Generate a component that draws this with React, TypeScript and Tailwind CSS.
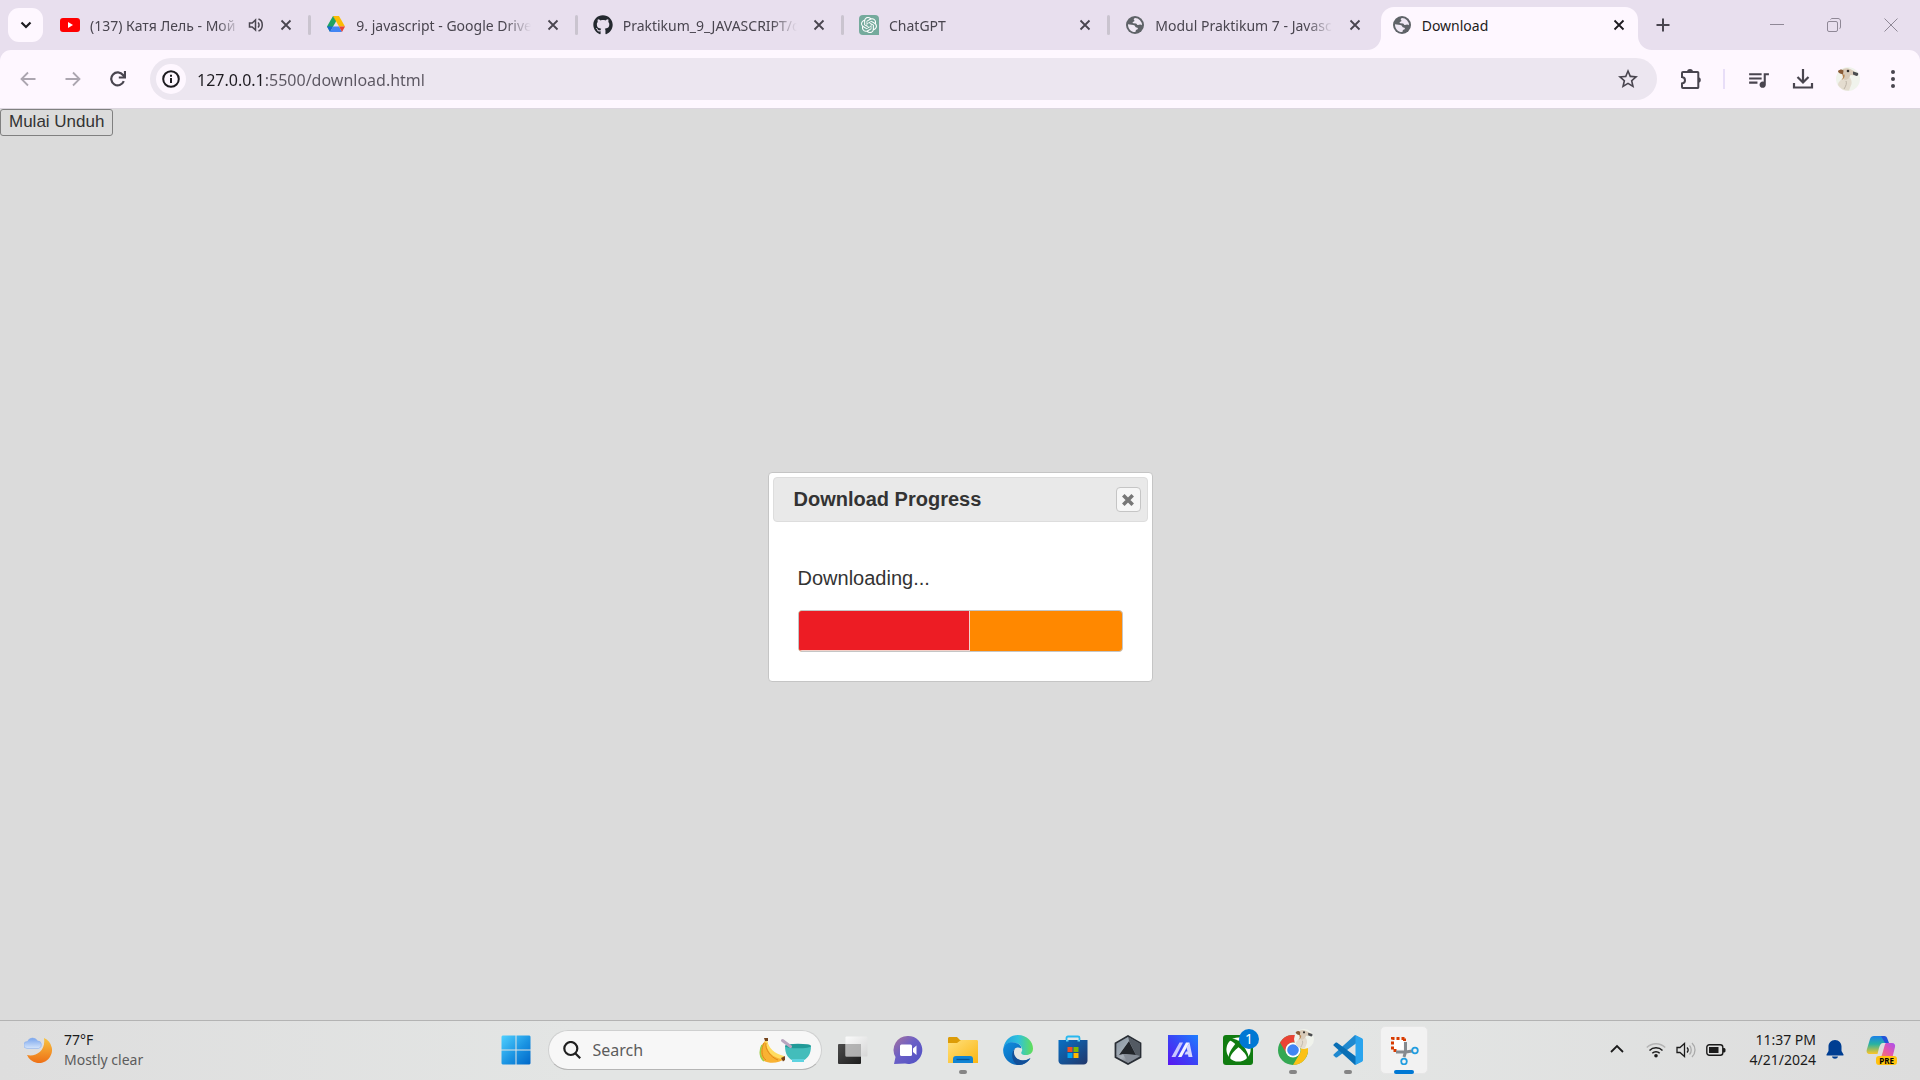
import React from "react";
import { MdQueueMusic, MdStarOutline } from "react-icons/md";
import { FaXbox, FaGithub } from "react-icons/fa";
import { SiOpenai } from "react-icons/si";

/* ---------- favicons ---------- */

const YouTube = () => (
  <svg viewBox="0 0 20 20" className="size-5 shrink-0">
    <rect y="3" width="20" height="14" rx="3" fill="#f00" />
    <path d="M8 7l5 3-5 3z" fill="#fff" />
  </svg>
);

const Drive = () => (
  <svg viewBox="0 0 20 20" className="size-5 shrink-0">
    <path d="M7 1h6l-3.400 5.600z" fill="#188038" />
    <path d="M7 1L1 11.600l3 5.200 6-10.400z" fill="#1ea362" />
    <path d="M7 1h6l6 10.600h-6z" fill="#fbbc04" />
    <path d="M1 11.600h6L4 17z" fill="#1967d2" />
    <path d="M7 11.600h6L16 17H4z" fill="#4285f4" />
    <path d="M13 11.600h6L16 17z" fill="#ea4335" />
  </svg>
);

const Globe = () => (
  <svg viewBox="0 0 20 20" className="size-5 shrink-0">
    <circle cx="10" cy="10" r="9" fill="#5f6368" />
    <path
      d="M10 3c-1.300.6-1.600 1.600-.8 2.300.8.6.2 1.200-.9 1.500-1 .3-.8 1.400.1 1.500l2.500.1c1 .1 1 1.200 1.700 1.500.9.3 1.700-.5 2.700-.4.8.1 1.200.7 1.700.7A7.100 7.100 0 0 0 10 3z"
      fill="#efe8f4"
    />
    <path
      d="M3 9.200C2.800 13.300 5.800 17 10 17c1 0 .5-1.300 1-1.900.5-.6 1.800-.4 1.900-1.600.1-1-.9-1-1.800-1.100-1-.1-.8-1.200-1.500-1.800C8.300 9.500 5 9.900 3 9.200z"
      fill="#efe8f4"
    />
  </svg>
);

const ChatFavicon = () => (
  <span className="flex size-5 shrink-0 items-center justify-center rounded-l-[4px] rounded-tr-[4px] bg-[#74aa9c] text-white">
    <SiOpenai size={16} />
  </span>
);

/* ---------- browser icons ---------- */

const Cross = () => (
  <svg viewBox="0 0 12 12" className="size-3" stroke="currentColor" strokeWidth="1.800">
    <path d="M1.500 1.500l9 9M10.500 1.500l-9 9" />
  </svg>
);

const Audio = () => (
  <svg viewBox="0 0 16 16" className="size-4 shrink-0" fill="none" stroke="currentColor" strokeWidth="1.500">
    <path d="M1.500 6v4h2.700l3.300 3V3L4.200 6z" />
    <path d="M10 5.500c1.400 1.200 1.400 3.800 0 5M10.500 2c5 1.600 5 10.400 0 12" />
  </svg>
);

const Arrow = ({ flip = false }: { flip?: boolean }) => (
  <svg viewBox="0 0 16 16" className={flip ? "size-4 -scale-x-100" : "size-4"} fill="none" stroke="currentColor" strokeWidth="1.800">
    <path d="M15.500 8H2M8 1.500L1.500 8 8 14.500" />
  </svg>
);

const Dog = ({ className }: { className: string }) => (
  <svg viewBox="0 0 24 24" className={className}>
    <circle cx="12" cy="12" r="12" fill="#f0f3ec" />
    <path d="M6 12c2-2 4-3 7-2 2 1 3 4 2.500 7L13 23.500A12 12 0 0 1 2 18c0-3 2-4 4-6z" fill="#e4dccf" />
    <path d="M7 2c3-1.500 6-1 9 1l5 3c1 1 .5 2.500-1 2.500L14.500 8c-1 3-3 5-6 5L6 8z" fill="#d9cbb9" />
    <path d="M2 4c2-2 4-2 5.500-.5L7 7.500 4 6.500C3 6 2 5 2 4z" fill="#8a5c37" />
    <path d="M6.500 7.500c1 2 .5 4-1 5.500 2.500-1 3.500-3 3-5.500z" fill="#b9854f" />
    <path d="M17 4.500l5 1.500c.5 1.500 0 3-1.500 3L17 7.500z" fill="#4b4d50" />
    <circle cx="12" cy="4" r="1.300" fill="#33302d" />
    <path d="M10 14c1 2 0 5-2 8" fill="none" stroke="#bdb3a6" />
  </svg>
);

type TabProps = { title: string; icon: React.ReactNode; audio?: boolean; active?: boolean; last?: boolean };

const Tab = ({ title, icon, audio, active, last }: TabProps) => (
  <div
    className={
      active
        ? "relative flex h-[43px] min-w-0 items-center self-end rounded-t-[13px] bg-[#fef7ff] pr-[13px] pb-[7px] pl-[11px] text-[#1d1b20]"
        : "flex h-[50px] min-w-0 items-center pl-[11px] text-[#49454f]"
    }
  >
    {active && (
      <>
        <svg viewBox="0 0 14 14" className="absolute bottom-0 -left-[14px] size-[14px]">
          <path d="M14 0v14H0A14 14 0 0 0 14 0z" fill="#fef7ff" />
        </svg>
        <svg viewBox="0 0 14 14" className="absolute -right-[14px] bottom-0 size-[14px]">
          <path d="M0 0v14h14A14 14 0 0 1 0 0z" fill="#fef7ff" />
        </svg>
      </>
    )}
    {icon}
    <span
      className={
        active
          ? "ml-2.5 min-w-0 flex-1 overflow-hidden pt-0.5 text-sm whitespace-nowrap"
          : "ml-2.5 min-w-0 flex-1 overflow-hidden [mask-image:linear-gradient(to_right,black_85%,transparent)] pt-0.5 text-sm whitespace-nowrap"
      }
    >
      {title}
    </span>
    {audio && (
      <span className="ml-2">
        <Audio />
      </span>
    )}
    <button aria-label={`Close ${title}`} className="ml-4 shrink-0">
      <Cross />
    </button>
    {!active && <span className={last ? "ml-4 w-1" : "mr-1 ml-4 h-5 w-[3px] rounded-full bg-[#cac4cf]"} />}
  </div>
);

const TabStrip = () => (
  <div className="flex h-[50px] items-center">
    <button aria-label="Search tabs" className="ml-2 flex h-[34px] w-[35px] shrink-0 items-center justify-center rounded-[11px] bg-[#fef7ff]">
      <svg viewBox="0 0 12 12" className="size-3" fill="none" stroke="#1d1b20" strokeWidth="2.200">
        <path d="M1.500 3.500L6 8l4.500-4.500" />
      </svg>
    </button>
    <div className="ml-1.5 grid max-w-[1589px] min-w-0 flex-1 grid-cols-[repeat(5,minmax(0,266fr))_minmax(0,257fr)]">
      <Tab title="(137) Катя Лель - Мой Мармеладный" icon={<YouTube />} audio />
      <Tab title="9. javascript - Google Drive" icon={<Drive />} />
      <Tab title="Praktikum_9_JAVASCRIPT/download" icon={<FaGithub className="size-5 shrink-0 text-[#24292f]" />} />
      <Tab title="ChatGPT" icon={<ChatFavicon />} />
      <Tab title="Modul Praktikum 7 - Javascript" icon={<Globe />} last />
      <Tab title="Download" icon={<Globe />} active />
    </div>
    <button aria-label="New tab" className="ml-[18px] shrink-0">
      <svg viewBox="0 0 14 14" className="size-3.5" stroke="#49454f" strokeWidth="2">
        <path d="M7 .5v13M.5 7h13" />
      </svg>
    </button>
    <div className="mr-[22px] ml-auto flex shrink-0 items-center gap-[43px] text-[#8f8896]">
      <button aria-label="Minimize">
        <svg viewBox="0 0 14 14" className="size-3.5" stroke="currentColor">
          <path d="M0 6.500h14" />
        </svg>
      </button>
      <button aria-label="Restore">
        <svg viewBox="0 0 14 14" className="size-3.5" fill="none" stroke="currentColor">
          <rect x=".5" y="3.500" width="10" height="10" rx="1.500" />
          <path d="M3.500 1.500C4 .8 4.500.5 5 .5h6c1.500 0 2.500 1 2.500 2.500v6c0 .8-.5 1.500-1 1.800" />
        </svg>
      </button>
      <button aria-label="Close window">
        <svg viewBox="0 0 14 14" className="size-3.5" stroke="currentColor">
          <path d="M.5.5l13 13M13.500.5l-13 13" />
        </svg>
      </button>
    </div>
  </div>
);

const Toolbar = () => (
  <div className="flex h-[59px] items-center rounded-t-[11px] border-b border-[#dcd6df] bg-[#fef7ff] text-[#49454f]">
    <div className="ml-5 flex items-center gap-[29px]">
      <button aria-label="Back" className="text-[#aca6b0]">
        <Arrow />
      </button>
      <button aria-label="Forward" className="text-[#aca6b0]">
        <Arrow flip />
      </button>
      <button aria-label="Reload">
        <svg viewBox="0 0 16 16" className="size-4" fill="none" stroke="currentColor" strokeWidth="2.200">
          <path d="M13.800 10.200A6.500 6.500 0 1 1 13 4l1.500 2" />
          <path d="M15 0v6.500H8.800" />
        </svg>
      </button>
    </div>
    <div className="ml-6 flex h-[42px] flex-1 items-center rounded-full bg-[#ece6f0] pl-1.5">
      <button aria-label="View site information" className="flex size-[30px] shrink-0 items-center justify-center rounded-full bg-[#fef7ff]">
        <svg viewBox="0 0 18 18" className="size-[18px]" fill="none" stroke="#1d1b20" strokeWidth="2">
          <circle cx="9" cy="9" r="7.800" />
          <path d="M9 8v5M9 4.800v2" />
        </svg>
      </button>
      <input
        aria-label="Address"
        defaultValue="127.0.0.1:5500/download.html"
        className="ml-[11px] min-w-0 flex-1 bg-[linear-gradient(to_right,#1d1b20_66px,#5b5661_66px)] bg-clip-text pt-0.5 text-base text-transparent outline-none"
      />
      <button aria-label="Bookmark this tab" className="mr-[17px]">
        <MdStarOutline size={24} />
      </button>
    </div>
    <button aria-label="Extensions" className="ml-[23px]">
      <svg viewBox="0 0 22 22" className="size-[22px]" fill="none" stroke="currentColor" strokeWidth="2">
        <path d="M3 4h14.500a.8.8 0 0 1 .8.8v14.400a.8.8 0 0 1-.8.8H3a1 1 0 0 1-1-1v-3.500c4-.5 4-6 0-6.500V5a1 1 0 0 1 1-1z" />
        <path d="M7 4a3 3 0 0 1 6 0zM18 9.200a2.800 2.800 0 0 1 0 5.600z" fill="currentColor" stroke="none" />
      </svg>
    </button>
    <span className="ml-[21px] h-5 w-0.5 bg-[#e8def8]" />
    <button aria-label="Media controls" className="ml-[21px]">
      <MdQueueMusic size={25} />
    </button>
    <button aria-label="Downloads" className="ml-[21px]">
      <svg viewBox="0 0 22 22" className="size-[22px]" fill="none" stroke="currentColor" strokeWidth="2.200">
        <path d="M11 1v13M5.500 9L11 14.500 16.500 9M2 15v4.500h18V15" />
      </svg>
    </button>
    <button aria-label="Profile" className="ml-[22px]">
      <Dog className="size-6" />
    </button>
    <button aria-label="Menu" className="mr-[25px] ml-[31px]">
      <svg viewBox="0 0 4 18" className="h-[18px] w-1" fill="currentColor">
        <circle cx="2" cy="2" r="2" />
        <circle cx="2" cy="9" r="2" />
        <circle cx="2" cy="16" r="2" />
      </svg>
    </button>
  </div>
);

/* ---------- page ---------- */

const Dialog = () => (
  <section
    role="dialog"
    aria-labelledby="dialog-title"
    className="w-[385px] rounded-[4px] border border-[#c5c5c5] bg-white p-1 font-['Liberation_Sans',Arial,sans-serif] text-xl text-[#333333]"
  >
    <header className="flex h-[45px] items-center justify-between rounded-[4px] border border-[#dddddd] bg-[#e9e9e9] pr-1.5 pl-5">
      <h1 id="dialog-title" className="pb-0.5 font-bold">
        Download Progress
      </h1>
      <button aria-label="Close" className="flex size-[25px] items-center justify-center rounded-[4px] border border-[#c5c5c5] bg-[#f6f6f6]">
        <svg viewBox="0 0 12 12" className="size-3" stroke="#777" strokeWidth="3.600">
          <path d="M1.300 1.300l9.400 9.400M10.700 1.300l-9.400 9.400" />
        </svg>
      </button>
    </header>
    <div className="px-[25px] pt-[42px] pb-[25px]">
      <p id="progress-label" className="leading-7">
        Downloading...
      </p>
      <div
        role="progressbar"
        aria-labelledby="progress-label"
        aria-valuenow={53}
        aria-valuemin={0}
        aria-valuemax={100}
        className="mt-[18px] flex h-[42px] overflow-hidden rounded-[4px] border border-[#c5c5c5] bg-[#ff8800]"
      >
        <div className="border-r border-b border-[#f5d0c8] bg-[#ed1c24]" style={{ width: "53%" }} />
      </div>
    </div>
  </section>
);

/* ---------- taskbar ---------- */

const Weather = () => (
  <svg viewBox="0 0 28 28" className="size-7">
    <defs>
      <linearGradient id="moon" x1="0" y1="0" x2="0" y2="1">
        <stop offset="0" stopColor="#f8c441" />
        <stop offset="1" stopColor="#ee7016" />
      </linearGradient>
      <linearGradient id="cloud" x1="0" y1="0" x2="0" y2="1">
        <stop offset="0" stopColor="#79a5ed" />
        <stop offset="1" stopColor="#d5e5fb" />
      </linearGradient>
    </defs>
    <path d="M20 2a13 13 0 1 1-17 17c9 2 19-4 17-17z" fill="url(#moon)" />
    <path d="M3 12.500a3.500 3.500 0 0 1 .5-7 5.500 5.500 0 0 1 10-.5 3.800 3.800 0 0 1 1 7.500z" fill="url(#cloud)" stroke="#8cb0ec" strokeWidth=".6" />
  </svg>
);

const Start = () => (
  <svg viewBox="0 0 30 30" className="size-[30px]">
    <defs>
      <linearGradient id="win" x1="0" y1="0" x2="1" y2="1">
        <stop offset="0" stopColor="#4fd0ff" />
        <stop offset=".55" stopColor="#1a93e2" />
        <stop offset="1" stopColor="#0067c8" />
      </linearGradient>
    </defs>
    <path d="M1.500.5H14.500V14.500H.5V1.500zM15.500.5H28.500l1 1V14.500h-14zM.5 15.500h14v14H1.500l-1-1zM15.500 15.500h14v13l-1 1h-13z" fill="url(#win)" />
  </svg>
);

const SearchArt = () => (
  <svg viewBox="0 0 52 26" className="h-[26px] w-[52px] shrink-0">
    <path d="M6 4C0 10-1 20 5 24c6 3 16 2 20-2-6-1-14-6-17-18z" fill="#f9b233" />
    <path d="M6 3h2c1 8 8 14 17 16v3C14 22 7 14 6 3z" fill="#ffdc60" />
    <path d="M5 6C2 11 2 20 7 23M7 6c-1 6 4 14 12 17" fill="none" stroke="#df8a18" />
    <path d="M3 8c-3 6-2 13 2 16" fill="none" stroke="#9fce49" strokeWidth="1.500" />
    <path d="M5 1h4v3H6zM22 21l4-2v4l-2 1.500z" fill="#76451c" />
    <path d="M26 9c0 8 3 12 7 14v2h12v-2c4-2 7-6 7-14z" fill="#43bdbb" />
    <ellipse cx="39" cy="9" rx="13" ry="2.300" fill="#219a98" />
    <path d="M23.500 3.500l8 6" stroke="#b9a4bf" strokeWidth="3" strokeLinecap="round" />
    <path d="M33 22h12v3H33z" fill="#5ed3e0" />
  </svg>
);

const TaskView = () => (
  <svg viewBox="0 0 30 30" className="size-[30px]">
    <defs>
      <linearGradient id="tv1" x1="0" y1="0" x2="1" y2="1">
        <stop offset="0" stopColor="#4c4c4c" />
        <stop offset="1" stopColor="#1d1d1d" />
      </linearGradient>
      <linearGradient id="tv2" x1="0" y1="0" x2="1" y2="1">
        <stop offset="0" stopColor="#fff" />
        <stop offset="1" stopColor="#d4d4d4" />
      </linearGradient>
    </defs>
    <rect x="0" y="9" width="23" height="20" rx="1" fill="url(#tv1)" />
    <rect x="7.500" y="1.500" width="22" height="20" rx="1" fill="url(#tv2)" opacity=".85" />
    <rect x="7.500" y="9" width="15.500" height="12.500" fill="#a8a8a8" opacity=".75" />
  </svg>
);

const Chat = () => (
  <svg viewBox="0 0 30 30" className="size-[30px]">
    <defs>
      <linearGradient id="chat" x1="0" y1="0" x2="1" y2="1">
        <stop offset="0" stopColor="#a9739c" />
        <stop offset=".45" stopColor="#6b5fc6" />
        <stop offset="1" stopColor="#4e50c4" />
      </linearGradient>
    </defs>
    <path d="M15 1a14 14 0 1 1-3 27.600L1 29l1.500-7A14 14 0 0 1 15 1z" fill="url(#chat)" />
    <rect x="7" y="9.500" width="12" height="11.500" rx="1.500" fill="#fff" />
    <path d="M20 13.500l3.500-3v9.500L20 17z" fill="#fff" />
  </svg>
);

const Folder = () => (
  <svg viewBox="0 0 30 30" className="size-[30px]">
    <defs>
      <linearGradient id="fold" x1="0" y1="0" x2="1" y2="1">
        <stop offset="0" stopColor="#ffe07c" />
        <stop offset="1" stopColor="#fbb612" />
      </linearGradient>
    </defs>
    <path d="M0 3.500C0 2.500.7 2 1.500 2H9l3 3h17v6H0z" fill="#dc9c08" />
    <path d="M0 8h9l4-3h15.500c1 0 1.500.5 1.500 1.500V28H0z" fill="url(#fold)" />
    <path d="M5 28v-4a3 3 0 0 1 3-3h14a3 3 0 0 1 3 3v4z" fill="#1184d4" />
    <path d="M8.500 24.500h13" stroke="#075696" strokeWidth="1.300" />
  </svg>
);

const Edge = () => (
  <svg viewBox="0 0 30 30" className="size-[30px]">
    <defs>
      <linearGradient id="edge1" x1="0" y1="0" x2="1" y2="0">
        <stop offset="0" stopColor="#1f9fe0" />
        <stop offset=".5" stopColor="#2fc1dd" />
        <stop offset="1" stopColor="#62df55" />
      </linearGradient>
      <linearGradient id="edge2" x1="0" y1="0" x2="1" y2="1">
        <stop offset="0" stopColor="#0f8fe0" />
        <stop offset="1" stopColor="#0c58a8" />
      </linearGradient>
    </defs>
    <path d="M.5 12.500C2 4.500 8 0 15 0c9 0 15 6.500 15 13.500 0 5-4 6.500-7 6.500-4 0-5.500-1.500-4.500-3 2-3.500-.5-7.500-5-9C8 6.500 3 8 .5 12.500z" fill="url(#edge1)" />
    <path d="M.2 14C1 9.500 5 7 9.500 7.200c5 .2 9 3.300 9 6.300-6-3-10 2-7.500 7 2 5 9 7 16.500 2.500C24 28.500 19 30.300 14 30 5.500 29.500-.5 22 .2 14z" fill="url(#edge2)" />
    <path d="M12 13.500c-3 5 .5 12.500 9 12 3 0 5-1.200 6.500-2.500-3 5-8 7.300-13 7-6-3-7-13-2.500-16.500z" fill="#124f98" />
  </svg>
);

const Store = () => (
  <svg viewBox="0 0 30 30" className="size-[30px]">
    <defs>
      <linearGradient id="store" x1="0" y1="0" x2="1" y2="1">
        <stop offset="0" stopColor="#0870c4" />
        <stop offset="1" stopColor="#22376b" />
      </linearGradient>
    </defs>
    <path d="M8.500 8V3a1.500 1.500 0 0 1 1.500-1.500h10A1.500 1.500 0 0 1 21.500 3v5" fill="none" stroke="#28b8ef" strokeWidth="1.800" />
    <path d="M.5 5h29v20a4 4 0 0 1-4 4.500h-21a4 4 0 0 1-4-4.500z" fill="url(#store)" />
    <path d="M8 5h2.500v1.500H8zM19.500 5H22v1.500h-2.500z" fill="#5bd0f6" />
    <path d="M9.500 12h5v5h-5z" fill="#f25022" />
    <path d="M15.500 12h5v5h-5z" fill="#7fba00" />
    <path d="M9.500 18h5v5h-5z" fill="#00a4ef" />
    <path d="M15.500 18h5v5h-5z" fill="#ffb900" />
  </svg>
);

const Crate = () => (
  <svg viewBox="0 0 30 30" className="size-[30px]">
    <defs>
      <linearGradient id="crate" x1="0" y1="0" x2="1" y2="1">
        <stop offset="0" stopColor="#5d656f" />
        <stop offset=".5" stopColor="#a9b0b9" />
        <stop offset="1" stopColor="#3c4149" />
      </linearGradient>
    </defs>
    <path d="M15 1l12.500 7.200v14L15 29 2.500 22.200v-14z" fill="url(#crate)" stroke="#292e35" strokeWidth="1.800" />
    <path d="M16 6l7 14-13-1-4 1z" fill="#22262b" />
    <path d="M16 6l7 14 4 1V8.500L15 2z" fill="#535a63" />
    <path d="M10 19l13 1 4 1-12 7z" fill="#858c96" />
    <path d="M15 2L3.500 8.500V20L6 19.500 16 6z" fill="#a4b0bd" opacity=".6" />
  </svg>
);

const Asus = () => (
  <svg viewBox="0 0 30 30" className="size-[30px]">
    <defs>
      <linearGradient id="asus" x1="0" y1="1" x2="1" y2="0">
        <stop offset="0" stopColor="#5a16f0" />
        <stop offset=".5" stopColor="#3a44f6" />
        <stop offset="1" stopColor="#1d7fff" />
      </linearGradient>
    </defs>
    <rect width="30" height="30" fill="url(#asus)" />
    <path d="M3.500 22L11.500 7.500H15L7.500 22z" fill="#c9c6ff" />
    <path d="M10 22L18 7.500H21.500L13.500 22z" fill="#f4f3ff" />
    <path d="M18.500 12.500L21.500 7.500 24.500 22H20.500L20 19.500H16.500L18 16.500H19.500z" fill="#d5d6ff" />
  </svg>
);

const Xbox = () => (
  <span className="relative flex size-[30px] items-center justify-center rounded-[3px] bg-[#107c10] text-white">
    <FaXbox size={25} />
    <span className="absolute -top-1.5 left-4 flex size-5 items-center justify-center rounded-full bg-[#0078d4] text-sm">1</span>
  </span>
);

const Chrome = () => (
  <span className="relative">
    <svg viewBox="0 0 30 30" className="size-[30px]">
      <circle cx="15" cy="15" r="15" fill="#34a853" />
      <path d="M2 7.500A15 15 0 0 1 28 7.500H15a7.500 7.500 0 0 0-6.500 11z" fill="#ea4335" />
      <path d="M28 7.500A15 15 0 0 1 15 30l6.500-11A7.500 7.500 0 0 0 15 7.500z" fill="#fbc116" />
      <circle cx="15" cy="15" r="7.500" fill="#fff" />
      <circle cx="15" cy="15" r="5.800" fill="#4285f4" />
    </svg>
    <Dog className="absolute -top-1.5 left-4 size-5" />
  </span>
);

const VsCode = () => (
  <svg viewBox="0 0 30 30" className="size-[30px]">
    <path d="M22 0L.8 19.300a1 1 0 0 0 0 1.500l1.700 1.500c.4.4 1 .4 1.400.1L29 4z" fill="#2089cf" />
    <path d="M22 30L.8 10.700a1 1 0 0 1 0-1.500l1.700-1.500c.4-.4 1-.4 1.400-.1L29 26z" fill="#0a6fb5" />
    <path d="M22 0l7 3.300c.6.3 1 .9 1 1.500v20.400c0 .6-.4 1.200-1 1.500L22 30c.3-.4.5-1 .5-1.500v-27c0-.5-.2-1.100-.5-1.500z" fill="#2aa4ee" />
  </svg>
);

const Snip = () => (
  <svg viewBox="0 0 30 30" className="size-[30px]">
    <rect x="4.500" y="4.500" width="10" height="10" fill="#fff" />
    <path d="M15.500 3.500h-12v12h4" fill="none" stroke="#d83b01" strokeWidth="3" strokeDasharray="3 2" />
    <path d="M15.500 3.500V8" fill="none" stroke="#d83b01" strokeWidth="3" strokeDasharray="2.500 2" />
    <path d="M16.500 7v10l-1.500 5M7 17h10l6-1" fill="none" stroke="#858a8f" strokeWidth="3" />
    <circle cx="26" cy="15.500" r="2.800" fill="none" stroke="#219de0" strokeWidth="1.800" />
    <circle cx="15" cy="26.500" r="2.800" fill="none" stroke="#219de0" strokeWidth="1.800" />
  </svg>
);

type AppProps = { name: string; children: React.ReactNode; running?: boolean };

const TaskApp = ({ name, children, running }: AppProps) => (
  <button aria-label={name} className="relative flex h-12 w-[55px] items-center justify-center">
    {children}
    {running && <span className="absolute bottom-0 h-1 w-2 rounded-full bg-[#858585]" />}
  </button>
);

const Copilot = () => (
  <span className="relative flex size-[30px]">
    <svg viewBox="0 0 30 30" className="size-[30px]">
      <defs>
        <linearGradient id="cp1" x1="0" y1="0" x2="0" y2="1">
          <stop offset="0" stopColor="#1b80e8" />
          <stop offset=".45" stopColor="#27b3a2" />
          <stop offset="1" stopColor="#ffc524" />
        </linearGradient>
        <linearGradient id="cp2" x1="1" y1="0" x2="0" y2="1">
          <stop offset="0" stopColor="#a94ff0" />
          <stop offset=".5" stopColor="#e858a6" />
          <stop offset="1" stopColor="#f58a4a" />
        </linearGradient>
      </defs>
      <path d="M8 1h9c2 0 3 1.200 3.500 3L22 8h-5c-2 0-3 1.500-4 5l-1.500 6H4c-3 0-4-2-3-5L4 4c.6-2 2-3 4-3z" fill="url(#cp1)" />
      <path d="M15 1h3c2 0 3 1.200 3.500 3L23 8h-4z" fill="#2354d8" />
      <path d="M20 8h6c2.500 0 3.500 2 3 4l-3 12H12c3 0 3.500-3 4.500-6l2-7c.4-1.300.7-2.400 1.500-3z" fill="url(#cp2)" />
    </svg>
    <span className="absolute -right-px bottom-0 rounded-[3px] bg-[#ffc20e] px-[3px] text-[8px] leading-[9px] font-bold text-black">PRE</span>
  </span>
);

const Tray = () => (
  <div className="flex items-center justify-end text-[#1b1b1b]">
    <button aria-label="Show hidden icons">
      <svg viewBox="0 0 14 14" className="size-3.5" fill="none" stroke="currentColor" strokeWidth="1.800">
        <path d="M1 10l6-6 6 6" />
      </svg>
    </button>
    <button aria-label="Network, volume and battery" className="ml-[22px] flex items-center gap-2.5 pt-0.5">
      <svg viewBox="0 0 20 16" className="h-4 w-5" fill="none" stroke="currentColor" strokeWidth="1.500">
        <path d="M.8 5.500a13 13 0 0 1 18.400 0" stroke="#b4b4b4" />
        <path d="M3.500 8.500a9.200 9.200 0 0 1 13 0M6.300 11.300a5.200 5.200 0 0 1 7.400 0" />
        <circle cx="10" cy="13.800" r="1.800" fill="currentColor" stroke="none" />
      </svg>
      <svg viewBox="0 0 20 16" className="h-4 w-5" fill="none" stroke="currentColor" strokeWidth="1.300">
        <path d="M1 5.500v5h3l4.500 4V1.500L4 5.500z" />
        <path d="M11 5.500c1.300 1.400 1.300 3.600 0 5" />
        <path d="M13.500 3.500c2.300 2.500 2.300 6.500 0 9M16 1c4 4 4 10 0 14" stroke="#aaa" />
      </svg>
      <svg viewBox="0 0 20 14" className="h-3.5 w-5" fill="none" stroke="currentColor" strokeWidth="1.400">
        <rect x=".8" y="1.800" width="16" height="10.400" rx="2.500" />
        <path d="M3 4h9.500v6H3z" fill="currentColor" stroke="none" />
        <path d="M17 5h1.500l1 1v2.500l-1 1H17z" fill="currentColor" stroke="none" />
      </svg>
    </button>
    <button className="ml-6 pt-0.5 text-right text-sm leading-5">
      11:37 PM
      <br />
      4/21/2024
    </button>
    <button aria-label="Notifications" className="ml-2.5 pt-0.5">
      <svg viewBox="0 0 18 20" className="h-5 w-[18px]" fill="#003e92">
        <path d="M9 0c4 0 6.500 3 6.500 6.500V11l2 3.500c.2.500 0 1-.7 1H1.200c-.7 0-.9-.5-.7-1l2-3.500V6.500C2.500 3 5 0 9 0zM6 16.500h6c-.5 3-5.500 3-6 0z" />
      </svg>
    </button>
    <button aria-label="Copilot" className="mr-6 ml-[22px] pt-0.5">
      <Copilot />
    </button>
  </div>
);

const Taskbar = () => (
  <footer className="grid h-[60px] shrink-0 grid-cols-[1fr_auto_1fr] items-center border-t border-[#b3b3b3] bg-[linear-gradient(to_right,#dedede,#e3e5e4_30%,#e3e5e4_70%,#dddddd)] pb-1">
    <button className="ml-6 flex items-center gap-3 justify-self-start pt-0.5 text-left text-sm leading-5">
      <Weather />
      <span>
        <span className="block text-[#1b1b1b]">77°F</span>
        <span className="block text-[#5c5c5c]">Mostly clear</span>
      </span>
    </button>
    <nav aria-label="Taskbar" className="flex items-center pt-0.5">
      <TaskApp name="Start">
        <Start />
      </TaskApp>
      <label className="mx-1 flex h-10 w-[274px] items-center rounded-full border border-[#cfd0d0] border-b-[#b5b5b5] bg-[#f7f7f7] pr-2.5 pl-3.5">
        <svg viewBox="0 0 18 18" className="size-[18px] shrink-0" fill="none" stroke="#1f1f1f" strokeWidth="2.200">
          <circle cx="7.800" cy="7.500" r="6.500" />
          <path d="M12.500 12.500l4.700 4.700" />
        </svg>
        <input aria-label="Search" placeholder="Search" className="ml-3 min-w-0 flex-1 bg-transparent text-base outline-none placeholder:text-[#5c5c5c]" />
        <SearchArt />
      </label>
      <TaskApp name="Task view">
        <TaskView />
      </TaskApp>
      <TaskApp name="Chat">
        <Chat />
      </TaskApp>
      <TaskApp name="File Explorer" running>
        <Folder />
      </TaskApp>
      <TaskApp name="Edge">
        <Edge />
      </TaskApp>
      <TaskApp name="Microsoft Store">
        <Store />
      </TaskApp>
      <TaskApp name="Armoury Crate">
        <Crate />
      </TaskApp>
      <TaskApp name="MyASUS">
        <Asus />
      </TaskApp>
      <TaskApp name="Xbox">
        <Xbox />
      </TaskApp>
      <TaskApp name="Chrome" running>
        <Chrome />
      </TaskApp>
      <TaskApp name="Visual Studio Code" running>
        <VsCode />
      </TaskApp>
      <button aria-label="Snipping Tool" className="relative mx-1 flex size-12 items-center justify-center rounded-[5px] border border-[#e6e6e6] bg-[#f2f2f2]">
        <Snip />
        <span className="absolute -bottom-px h-1 w-5 rounded-full bg-[#0078d4]" />
      </button>
    </nav>
    <Tray />
  </footer>
);

export default function App() {
  return (
    <div className="flex min-h-screen flex-col bg-[#e8dfee] font-['Noto_Sans',sans-serif]">
      <TabStrip />
      <Toolbar />
      <main className="flex flex-1 flex-col bg-[#dbdbdb]">
        <button className="self-start rounded-[3px] border border-[#808080] px-2 pt-0.5 pb-[3px] font-['Liberation_Sans',Arial,sans-serif] text-[17px] leading-5 text-[#333333]">
          Mulai Unduh
        </button>
        <div className="flex flex-1 items-center justify-center pb-0.5">
          <Dialog />
        </div>
      </main>
      <Taskbar />
    </div>
  );
}
